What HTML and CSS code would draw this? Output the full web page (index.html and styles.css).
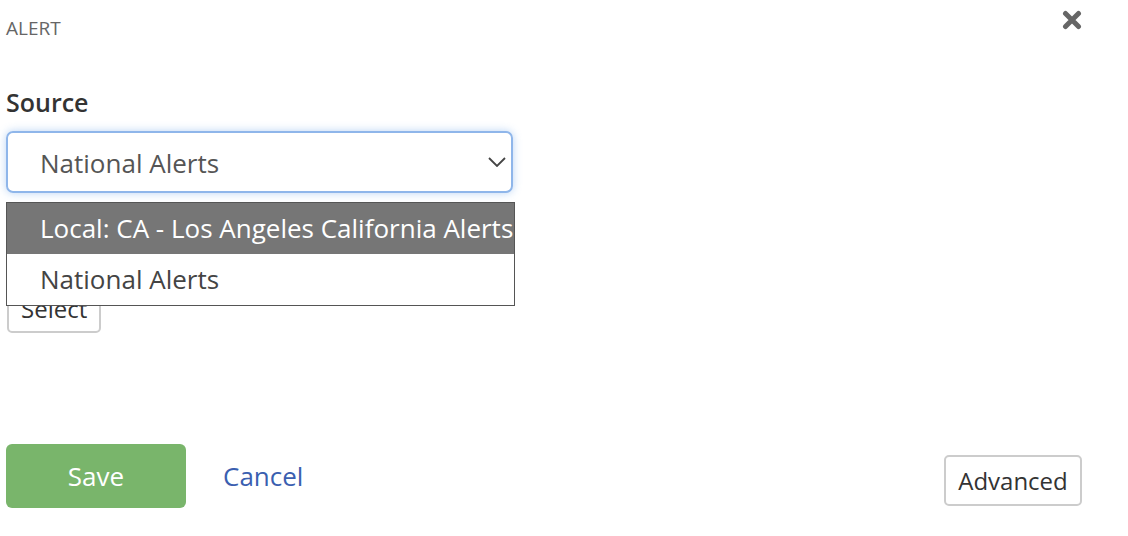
FILE: index.html
```html
<!DOCTYPE html>
<html>
<head>
<meta charset="utf-8">
<link rel="stylesheet" href="styles.css">
</head>
<body>
<div class="dialog">
  <div class="header">
    <div class="title">ALERT</div>
    <div class="close" aria-label="Close">
      <svg width="20" height="20" viewBox="0 0 20 20"><path d="M3.5 3.5 L16.5 16.5 M16.5 3.5 L3.5 16.5" stroke="#666" stroke-width="5" stroke-linecap="round" fill="none"/></svg>
    </div>
  </div>
  <div class="field">
    <div class="label">Source</div>
    <div class="select-wrap">
      <div class="select">
        <span class="select-value">National Alerts</span>
        <svg class="chevron" width="18" height="10" viewBox="0 0 18 10"><path d="M1 1 L9 9 L17 1" stroke="#444" stroke-width="1.8" fill="none"/></svg>
      </div>
      <div class="menu">
        <div class="option active">Local: CA - Los Angeles California Alerts</div>
        <div class="option">National Alerts</div>
      </div>
    </div>
  </div>
  <div class="field second">
    <button class="btn plain">Select</button>
  </div>
  <div class="footer">
    <div class="actions">
      <button class="btn save">Save</button>
      <a class="cancel">Cancel</a>
    </div>
    <button class="btn plain advanced">Advanced</button>
  </div>
</div>
</body>
</html>
```
FILE: styles.css
```css
* { box-sizing: border-box; }
html, body { margin: 0; padding: 0; background: #fff; }
body {
  font-family: "Open Sans", "Liberation Sans", sans-serif;
  color: #333;
  width: 1128px;
  height: 536px;
  overflow: hidden;
}
.dialog {
  padding: 0 46px 0 6px;
  display: flex;
  flex-direction: column;
}
.header {
  display: flex;
  justify-content: space-between;
  align-items: flex-start;
  height: 80px;
}
.title {
  font-size: 19px;
  color: #666;
  margin-top: 15px;
  line-height: 26px;
}
.close {
  margin-top: 10px;
  width: 20px;
  height: 20px;
}
.close svg { display: block; }
.label {
  font-size: 25px;
  font-weight: 600;
  color: #333;
  line-height: 44px;
  height: 44px;
}
.select-wrap { position: relative; }
.select {
  width: 507px;
  height: 62px;
  margin-top: 7px;
  border: 2px solid #8fb6ea;
  border-radius: 7px;
  box-shadow: 0 0 8px rgba(102, 160, 233, 0.45);
  display: flex;
  align-items: center;
  justify-content: space-between;
  padding: 0 5px 0 32px;
  font-size: 26px;
  color: #555;
}
.select-value { margin-top: 2px; }
.chevron { display: block; }
.menu {
  position: absolute;
  left: 0;
  top: 71px;
  width: 509px;
  border: 1px solid #555;
  background: #fff;
  z-index: 2;
}
.option {
  height: 51px;
  line-height: 50px;
  padding-left: 33px;
  font-size: 26px;
  color: #444;
  white-space: nowrap;
}
.option.active {
  background: #767676;
  color: #fff;
}
.field.second { margin-top: 90px; }
.btn {
  font-family: "Open Sans", "Liberation Sans", sans-serif;
  cursor: pointer;
}
.plain {
  background: #fff;
  border: 2px solid #ccc;
  border-radius: 5px;
  font-size: 24px;
  color: #333;
  padding: 0 12px;
  height: 50px;
}
.second .plain { width: 94px; margin-left: 1px; }
.footer {
  margin-top: 111px;
  display: flex;
  justify-content: space-between;
  align-items: flex-start;
}
.actions {
  display: flex;
  align-items: center;
  gap: 37px;
}
.save {
  width: 180px;
  height: 64px;
  background: #79b56b;
  border: none;
  border-radius: 6px;
  color: #fff;
  font-size: 26px;
}
.cancel {
  color: #3b5fb0;
  font-size: 26px;
  margin-top: -1px;
}
.advanced {
  margin-top: 11px;
  width: 138px;
  height: 51px;
  font-size: 24px;
}
```
